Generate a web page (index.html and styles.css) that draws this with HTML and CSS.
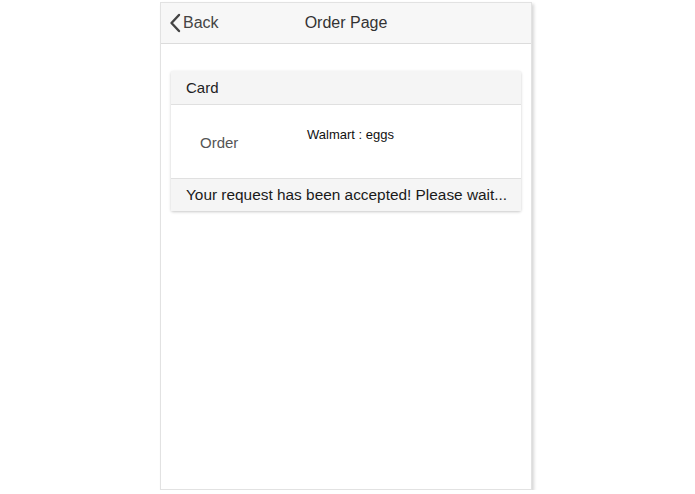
FILE: index.html
```html
<!DOCTYPE html>
<html>
<head>
<meta charset="utf-8">
<link rel="stylesheet" href="styles.css">
</head>
<body>
<div class="screen">
  <div class="navbar">
    <div class="back">
      <svg class="chev" width="12" height="20" viewBox="0 0 12 20"><path d="M10 2 L2.5 10 L10 18" fill="none" stroke="#444" stroke-width="2.4" stroke-linecap="round" stroke-linejoin="round"/></svg>
      <span>Back</span>
    </div>
    <div class="title">Order Page</div>
  </div>
  <div class="content">
    <div class="card">
      <div class="card-header">Card</div>
      <div class="card-body">
        <div class="label">Order</div>
        <div class="value">Walmart : eggs</div>
      </div>
      <div class="card-footer">Your request has been accepted! Please wait...</div>
    </div>
  </div>
</div>
</body>
</html>
```
FILE: styles.css
```css
html, body {
  margin: 0;
  padding: 0;
  background: #fff;
  font-family: "Liberation Sans", Arial, sans-serif;
}
body {
  padding-top: 2px;
  padding-left: 160px;
}
.screen {
  width: 372px;
  height: 488px;
  border: 1px solid #e2e2e2;
  box-shadow: 2px 2px 3px rgba(0,0,0,0.16);
  background: #fff;
  box-sizing: border-box;
}
.navbar {
  position: relative;
  height: 40px;
  background: #f7f7f7;
  border-bottom: 1px solid #dcdcdc;
  display: flex;
  align-items: center;
  justify-content: center;
}
.back {
  position: absolute;
  left: 8px;
  top: 0;
  height: 40px;
  display: flex;
  align-items: center;
  gap: 2px;
  color: #444;
  font-size: 16px;
}
.title {
  color: #333;
  font-size: 16px;
}
.content {
  padding: 27px 10px 0 10px;
}
.card {
  background: #fff;
  border-radius: 2px;
  box-shadow: 0 1px 3px rgba(0,0,0,0.22);
}
.card-header {
  height: 33px;
  background: #f5f5f5;
  border-bottom: 1px solid #e0e0e0;
  display: flex;
  align-items: center;
  padding-left: 15px;
  font-size: 15px;
  color: #222;
}
.card-body {
  height: 73px;
  display: flex;
  border-bottom: 1px solid #e0e0e0;
}
.label {
  width: 106px;
  padding-left: 29px;
  padding-top: 29px;
  font-size: 15px;
  color: #555;
  box-sizing: border-box;
}
.value {
  padding-left: 30px;
  padding-top: 22px;
  font-size: 13px;
  color: #111;
}
.card-footer {
  height: 32px;
  background: #f5f5f5;
  display: flex;
  align-items: center;
  padding-left: 15px;
  font-size: 15.4px;
  color: #1a1a1a;
}
```
